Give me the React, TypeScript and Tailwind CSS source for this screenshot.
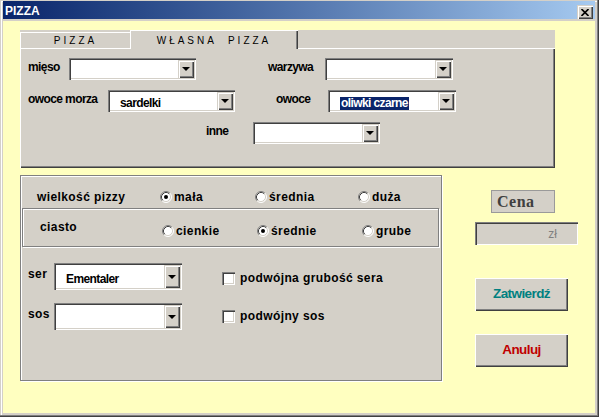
import React from "react";

const sunken =
  "shadow-[inset_1px_1px_#808080,inset_2px_2px_#404040,inset_-1px_-1px_#ffffff,inset_-2px_-2px_#d4d0c8]";
const raised =
  "shadow-[inset_1px_1px_#d4d0c8,inset_2px_2px_#ffffff,inset_-1px_-1px_#404040,inset_-2px_-2px_#808080]";
const narrow =
  "font-['Liberation_Sans',Arial,sans-serif] font-bold text-[12px] leading-[13px] tracking-[-0.6px] whitespace-nowrap";
const arial = "font-['Liberation_Sans',Arial,sans-serif] font-bold text-[12px] leading-[14px] tracking-[0.4px] whitespace-nowrap";
const etched = "border border-[#808080] shadow-[inset_1px_1px_#ffffff,1px_1px_#ffffff]";

function Combo({ w, h = 22, value, selected }: { w: number; h?: number; value?: string; selected?: boolean }) {
  return (
    <div className={`flex items-center bg-white p-[2px] ${sunken}`} style={{ width: w, height: h }}>
      <div className="flex-1 pl-[10px] text-black">
        {value &&
          (selected ? (
            <span className={`${narrow} inline-block bg-[#0a246a] px-[1px] text-white`}>{value}</span>
          ) : (
            <span className={narrow}>{value}</span>
          ))}
      </div>
      <div className={`flex h-full w-[16px] items-center justify-center bg-[#d4d0c8] ${raised}`}>
        <div className="h-0 w-0 border-x-[4px] border-t-[4px] border-x-transparent border-t-black" />
      </div>
    </div>
  );
}

function Radio({ label, checked, w }: { label: string; checked?: boolean; w?: number }) {
  return (
    <div className="flex items-center gap-[2px]" style={w ? { width: w } : undefined}>
      <svg width="12" height="12" viewBox="0 0 12 12">
        <circle cx="6" cy="6" r="5" fill="#ffffff" />
        <path d="M2.11 9.89 A5.5 5.5 0 0 1 9.89 2.11" fill="none" stroke="#808080" />
        <path d="M9.89 2.11 A5.5 5.5 0 0 1 2.11 9.89" fill="none" stroke="#ffffff" />
        <path d="M2.82 9.18 A4.5 4.5 0 0 1 9.18 2.82" fill="none" stroke="#404040" />
        <path d="M9.18 2.82 A4.5 4.5 0 0 1 2.82 9.18" fill="none" stroke="#d4d0c8" />
        {checked && <circle cx="6" cy="6" r="2" fill="#000000" />}
      </svg>
      <span className={arial}>{label}</span>
    </div>
  );
}

function Check({ label }: { label: string }) {
  return (
    <div className="flex items-center gap-[5px]">
      <div className={`h-[13px] w-[13px] bg-white ${sunken}`} />
      <span className={arial}>{label}</span>
    </div>
  );
}

function Button({ children, color }: { children: React.ReactNode; color: string }) {
  return (
    <button
      className={`flex h-[33px] w-[93px] items-center justify-center bg-[#d4d0c8] shadow-[inset_1px_1px_#ffffff,inset_-1px_-1px_#404040,inset_-2px_-2px_#808080] font-['Liberation_Sans',Arial,sans-serif] text-[13.5px] font-bold tracking-[-0.6px] ${color}`}
    >
      {children}
    </button>
  );
}

export default function App() {
  return (
    <div className="flex h-[417px] w-[599px] flex-col bg-[#d4d0c8] pb-[4px] pl-[3px] pr-[4px] pt-[1px] shadow-[inset_-1px_-1px_#404040,inset_-2px_-2px_#808080,inset_1px_1px_#d4d0c8,inset_2px_2px_#ffffff]">
      {/* Title bar */}
      <div className="flex h-[18px] items-start bg-linear-to-r from-[#0a246a] to-[#a6caf0]">
        <span className="pl-[2px] pt-[3px] font-['Liberation_Sans',Arial,sans-serif] text-[12px] font-bold leading-[14px] text-white">
          PIZZA
        </span>
        <div className={`ml-auto mr-[2px] mt-[4px] flex h-[14px] w-[16px] items-center justify-center bg-[#d4d0c8] ${raised}`}>
          <svg width="8" height="7" viewBox="0 0 8 7">
            <path d="M0.5 0 L7.5 7 M7.5 0 L0.5 7" stroke="#000" strokeWidth="1.6" />
          </svg>
        </div>
      </div>

      {/* Client */}
      <div className="mt-[2px] flex flex-1 flex-col bg-[#ffffc0] pl-[17px] pt-[9px]">
        {/* Multipage */}
        <div className="w-[535px]">
          <div className="flex h-[19px] bg-[#d4d0c8]">
            <div className="mt-[2px] flex w-[110px] items-center justify-center border-b border-l border-t border-white font-['Liberation_Sans',Arial,sans-serif] text-[10px] tracking-[3px] text-black">
              PIZZA
            </div>
            <div className="flex w-[168px] items-center justify-center whitespace-pre pt-[2px] shadow-[inset_1px_1px_#ffffff,inset_-1px_0_#404040,inset_-2px_0_#808080] font-['Liberation_Sans',Arial,sans-serif] text-[10px] tracking-[3px] text-black">
              {"WŁASNA  PIZZA"}
            </div>
            <div className="flex-1 border-b border-white" />
          </div>
          <div className="flex h-[119px] flex-col gap-[10px] bg-[#d4d0c8] pt-[9px] shadow-[inset_1px_0_#ffffff,inset_-1px_-1px_#404040,inset_-2px_-2px_#808080]">
            <div className="flex h-[22px] items-center pl-[8px]">
              <span className={`${narrow} w-[41px] pb-[4px]`}>mięso</span>
              <Combo w={127} />
              <span className={`${narrow} ml-[72px] w-[57px] pb-[4px]`}>warzywa</span>
              <Combo w={128} />
            </div>
            <div className="flex h-[22px] items-center pl-[8px]">
              <span className={`${narrow} w-[80px] pb-[4px]`}>owoce morza</span>
              <Combo w={127} value="sardelki" />
              <span className={`${narrow} ml-[41px] w-[52px] pb-[4px]`}>owoce</span>
              <Combo w={128} value="oliwki czarne" selected />
            </div>
            <div className="flex h-[22px] items-center pl-[186px]">
              <span className={`${narrow} w-[47px] pb-[4px]`}>inne</span>
              <Combo w={127} />
            </div>
          </div>
        </div>

        <div className="mt-[7px] flex items-start">
          {/* Options panel */}
          <div className={`flex h-[206px] w-[422px] flex-col bg-[#d4d0c8] ${etched}`}>
            <div className="mt-[11px] flex h-[20px] items-center pl-[16px]">
              <span className={`${arial} w-[123px]`}>wielkość pizzy</span>
              <Radio label="mała" checked w={95} />
              <Radio label="średnia" w={103} />
              <Radio label="duża" />
            </div>
            <div className={`ml-[1px] mt-[1px] flex h-[39px] w-[417px] items-start pl-[17px] ${etched}`}>
              <span className={`${arial} mt-[11px] w-[122px]`}>ciasto</span>
              <div className="mt-[15px] flex">
                <Radio label="cienkie" w={95} />
                <Radio label="średnie" checked w={105} />
                <Radio label="grube" />
              </div>
            </div>
            <div className="mt-[16px] flex items-start pl-[7px]">
              <span className={`${arial} mt-[4px] w-[26px]`}>ser</span>
              <Combo w={128} h={27} value="Ementaler" />
              <div className="ml-[40px] mt-[8px]">
                <Check label="podwójna grubość sera" />
              </div>
            </div>
            <div className="mt-[13px] flex items-start pl-[7px]">
              <span className={`${arial} mt-[4px] w-[26px]`}>sos</span>
              <Combo w={128} h={27} />
              <div className="ml-[40px] mt-[6px]">
                <Check label="podwójny sos" />
              </div>
            </div>
          </div>

          {/* Right column */}
          <div className="ml-[33px] flex flex-col items-start">
            <div className="ml-[16px] mt-[15px] flex h-[23px] w-[64px] items-center border border-[#9a9a9a] bg-[#d4d0c8] pl-[5px] font-['Liberation_Serif','Times_New_Roman',serif] text-[16px] font-bold tracking-[0.5px] text-[#404040]">
              Cena
            </div>
            <div className={`mt-[9px] flex h-[23px] w-[103px] items-center justify-end bg-[#d4d0c8] pr-[21px] ${sunken} font-['Liberation_Sans',Arial,sans-serif] text-[12px] text-[#808080]`}>
              zł
            </div>
            <div className="mt-[33px]">
              <Button color="text-[#008080]">Zatwierdź</Button>
            </div>
            <div className="mt-[23px]">
              <Button color="text-[#c00000]">Anuluj</Button>
            </div>
          </div>
        </div>
      </div>
    </div>
  );
}
